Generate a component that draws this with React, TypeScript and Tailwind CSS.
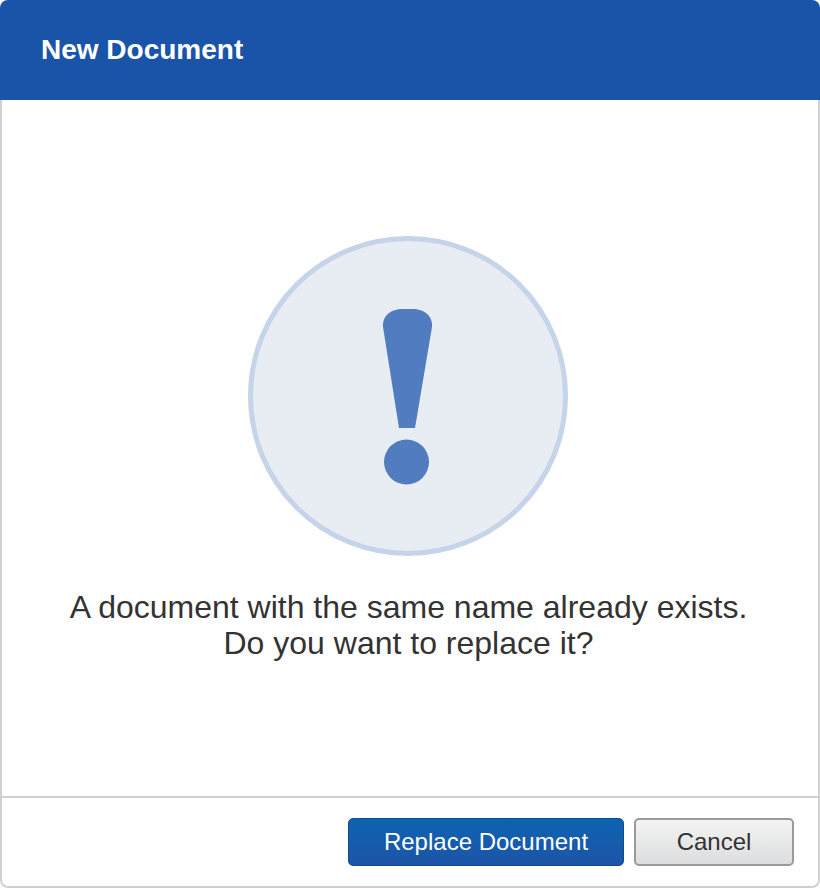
export default function App() {
  return (
    <div className="flex h-[888px] w-[820px] flex-col font-['Liberation_Sans',Arial,sans-serif]">
      <header className="flex h-[100px] shrink-0 items-center rounded-t-[8px] bg-[#1a54a8] pb-[1px] pl-[41px]">
        <h1 className="text-[28px] font-bold text-white">New Document</h1>
      </header>

      <main className="flex flex-1 flex-col items-center border-x-2 border-[#d0d0d0] bg-white pt-[136px]">
        <svg width="320" height="320" viewBox="0 0 320 320" className="mr-[4px] shrink-0">
          <circle cx="160" cy="160" r="157.5" fill="#e8edf4" stroke="#c5d4e8" strokeWidth="5" />
          <path
            d="M135 91C134 79 144 73 154 73H165C175 73 185 79 184 91L167 192H151Z"
            fill="#517dc0"
          />
          <circle cx="158.5" cy="226" r="22.5" fill="#517dc0" />
        </svg>
        <p className="mt-[33px] mr-[3px] text-center text-[32px] leading-[36px] text-[#333333]">
          A document with the same name already exists.
          <br />
          Do you want to replace it?
        </p>
      </main>

      <footer className="flex h-[92px] shrink-0 items-start justify-end gap-[10px] rounded-b-[8px] border-2 border-[#d0d0d0] bg-white pt-[20px] pr-[24px]">
        <button className="h-[48px] w-[276px] rounded-[5px] border border-[#124a8c] bg-gradient-to-b from-[#0a64b0] to-[#1c54a8] text-[24px] text-white">
          Replace Document
        </button>
        <button className="h-[48px] w-[160px] rounded-[5px] border-2 border-[#9a9a9c] bg-gradient-to-b from-[#f4f4f4] to-[#dcdddf] text-[24px] text-[#333333]">
          Cancel
        </button>
      </footer>
    </div>
  );
}
